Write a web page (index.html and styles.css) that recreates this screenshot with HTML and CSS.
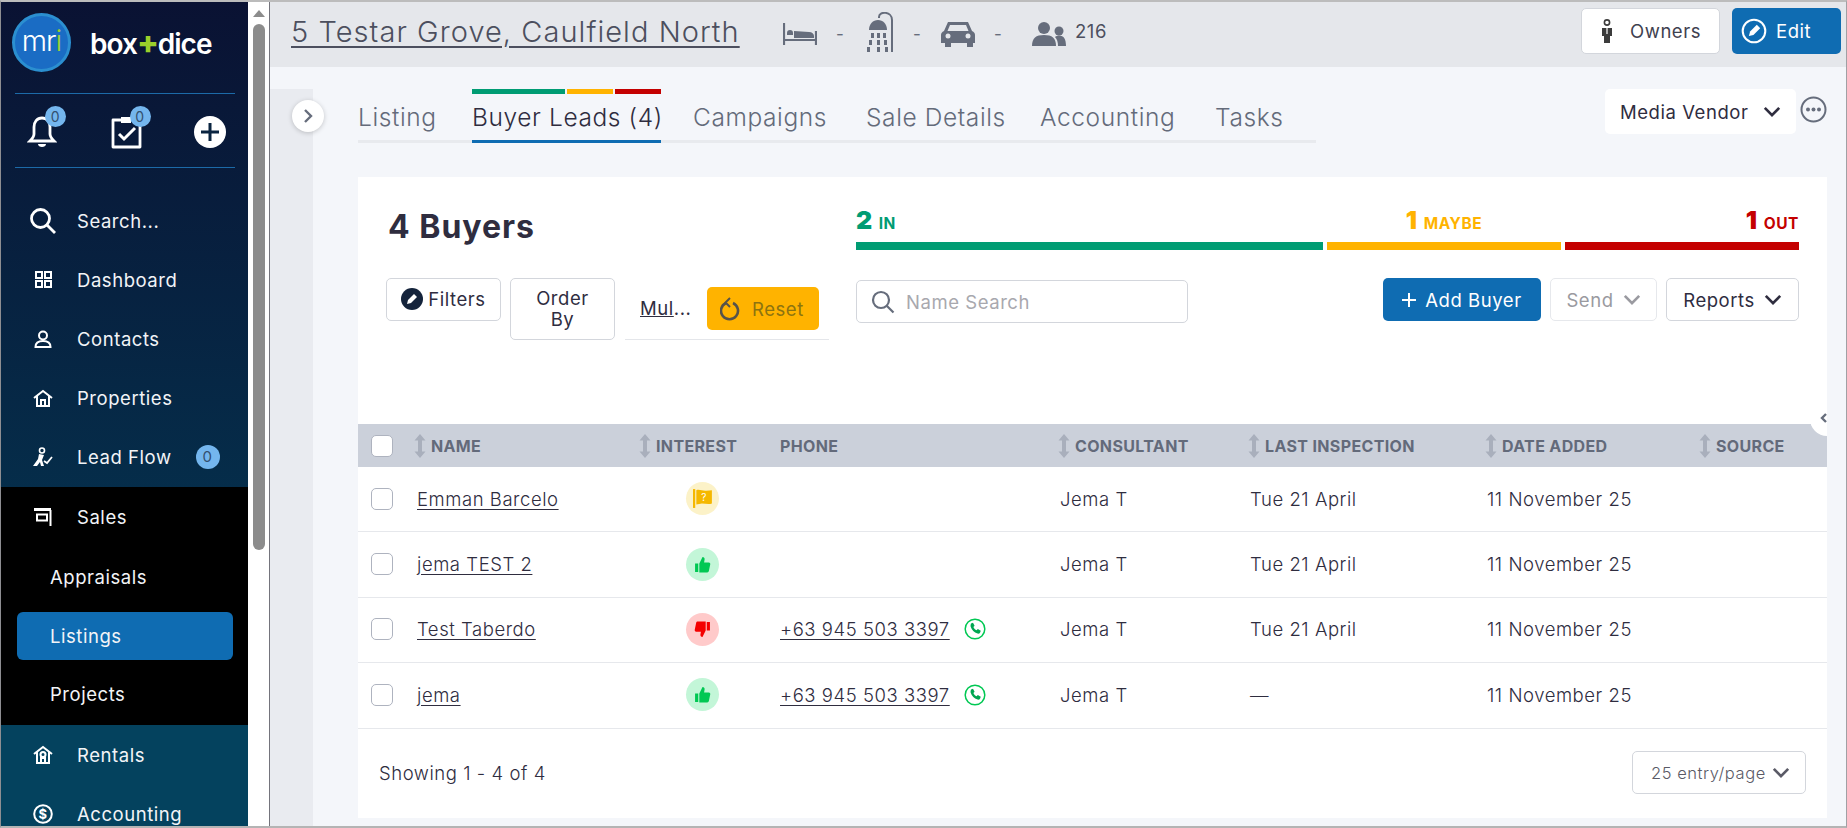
FILE: index.html
```html
<!DOCTYPE html>
<html lang="en">
<head>
<meta charset="UTF-8">
<title>Buyer Leads</title>
<link rel="stylesheet" href="styles.css">
</head>
<body>
<svg class="defs" width="0" height="0">
    <symbol id="sort" viewBox="0 0 12 24"><path d="M6 0l5.500 6.500H8v11h3.500L6 24 .5 17.500H4v-11H.5z" fill="currentColor"/></symbol>
    <symbol id="chev" viewBox="0 0 20 12"><path d="M2 2l8 8 8-8" fill="none" stroke="currentColor" stroke-width="3"/></symbol>
    <symbol id="up" viewBox="0 0 16 16"><path d="M1 7h3v8H1zM5 7l3-6c1.500 0 2 1 2 2l-.5 3H14c1 0 1.500 1 1.300 1.800l-1.300 6.400c-.2.800-.8 1.300-1.500 1.300H5z" fill="#00c853"/></symbol>
    <symbol id="call" viewBox="0 0 22 22"><circle cx="11" cy="11" r="9.800" fill="none" stroke="#00c853" stroke-width="1.500"/><path d="M7 5.500l2-.8 1.600 3-1.200 1.200c.6 1.500 1.700 2.700 3.200 3.400l1.200-1.200 3 1.700-.8 2c-.5.800-1.500 1-2.500.7-3.300-1-5.800-3.600-6.800-6.800-.3-1 0-2.500.3-3.200z" fill="#00a651"/></symbol>
</svg>

<div class="window">
    <aside class="sidebar">
        <div class="brand">
            <div class="mri"><span>mr</span><span class="green">i</span></div>
            <div class="boxdice">box<span class="green">+</span>dice</div>
        </div>
        <div class="quick">
            <div class="quick-item">
                <svg width="30" height="34" viewBox="0 0 30 34"><path d="M15 3c-5 0-8 4-8 9v7c0 3-2 5-4 7h24c-2-2-4-4-4-7v-7c0-5-3-9-8-9z" fill="none" stroke="#fff" stroke-width="2.800"/><path d="M11 29h8c0 2-2 3-4 3s-4-1-4-3z" fill="#fff"/></svg>
                <span class="count">0</span>
            </div>
            <div class="quick-item">
                <svg width="32" height="34" viewBox="0 0 32 34"><path d="M11 5H3v27h27V5h-8" fill="none" stroke="#fff" stroke-width="2.800" stroke-linejoin="round"/><path d="M11 2h10v6H11z" fill="#fff"/><path d="M9 19l5 5 11-11" fill="none" stroke="#fff" stroke-width="3"/></svg>
                <span class="count">0</span>
            </div>
            <div class="quick-item">
                <svg width="32" height="32" viewBox="0 0 32 32"><circle cx="16" cy="16" r="16" fill="#fff"/><path d="M16 7v18M7 16h18" stroke="#0a2440" stroke-width="3"/></svg>
            </div>
        </div>

        <nav class="nav">
            <a class="nav-item"><span class="nav-icon"><svg width="28" height="28" viewBox="0 0 28 28"><circle cx="11.500" cy="11.500" r="9" fill="none" stroke="#fff" stroke-width="2.800"/><path d="M18 18l8 8" stroke="#fff" stroke-width="2.800"/></svg></span>Search...</a>
            <a class="nav-item"><span class="nav-icon"><svg width="17" height="17" viewBox="0 0 17 17" fill="none" stroke="#fff" stroke-width="2"><path d="M1 1h6v6H1zM10 1h6v6h-6zM1 10h6v6H1zM10 10h6v6h-6z"/></svg></span>Dashboard</a>
            <a class="nav-item"><span class="nav-icon"><svg width="18" height="18" viewBox="0 0 18 18" fill="none" stroke="#fff" stroke-width="2"><circle cx="9" cy="5.500" r="4"/><path d="M1.500 17c0-4 3-6 7.500-6s7.500 2 7.500 6z"/></svg></span>Contacts</a>
            <a class="nav-item"><span class="nav-icon"><svg width="20" height="18" viewBox="0 0 20 18" fill="none" stroke="#fff" stroke-width="2"><path d="M1 9l9-7 9 7M4 7v10h12V7M8 17v-6h4v6"/></svg></span>Properties</a>
            <a class="nav-item"><span class="nav-icon"><svg width="20" height="20" viewBox="0 0 20 20"><circle cx="9" cy="3.500" r="2.500" fill="none" stroke="#fff" stroke-width="1.600"/><path d="M6 7l5 1-2 5 2 6H8l-1-4-3 4H0l5-7z" fill="#fff"/><path d="M11 14l3 2 5-6" fill="none" stroke="#fff" stroke-width="1.800"/></svg></span>Lead Flow<span class="nav-count">0</span></a>
            <div class="nav-group">
                <a class="nav-item"><span class="nav-icon"><svg width="18" height="18" viewBox="0 0 18 18" fill="none" stroke="#fff"><path d="M16.500 2v16" stroke-width="2"/><path d="M3 6.500h10v6H3z" stroke-width="2"/><path d="M0 0h17v3H0z" fill="#fff" stroke="none"/></svg></span>Sales</a>
                <a class="nav-sub">Appraisals</a>
                <a class="nav-sub active">Listings</a>
                <a class="nav-sub">Projects</a>
            </div>
            <div class="nav-rest">
                <a class="nav-item"><span class="nav-icon"><svg width="20" height="19" viewBox="0 0 20 19" fill="none" stroke="#fff" stroke-width="2"><path d="M1 9l9-7 9 7M4 7v11h12V7"/><circle cx="10" cy="9.500" r="2.500"/><path d="M8 18v-5h4v5"/></svg></span>Rentals</a>
                <a class="nav-item"><span class="nav-icon"><svg width="20" height="20" viewBox="0 0 20 20"><circle cx="10" cy="10" r="8.800" fill="none" stroke="#fff" stroke-width="2"/><text x="10" y="14.500" text-anchor="middle" class="dollar">$</text></svg></span>Accounting</a>
            </div>
        </nav>
    </aside>

    <div class="scrollbar">
        <div class="scroll-up"></div>
        <div class="scroll-thumb"></div>
    </div>

    <main class="main">
        <header class="topbar">
            <a class="address">5 Testar Grove, Caulfield North</a>
            <div class="facts">
                <svg width="34" height="24" viewBox="0 0 34 24"><path d="M1 1v22M33 9v14M1 18h32" fill="none" stroke="#666d7c" stroke-width="2.200"/><path d="M4 11a3 3 0 1 1 6 0v2H4zM11 9l15 1c3 0 5 2 5 4v2H11z" fill="#666d7c"/></svg>
                <span class="dash">-</span>
                <svg class="shower" width="28" height="40" viewBox="0 0 28 40"><path d="M13 6V5c0-6 13-6 13 3v32" fill="none" stroke="#666d7c" stroke-width="2"/><path d="M3 18c0-6 4-10 9-10s9 4 9 10z" fill="#666d7c"/><path d="M5 21h3v5H5zM11 21h3v5h-3zM17 21h3v5h-3zM3 28h3v5H3zM11 28h3v5h-3zM18 28h3v5h-3zM1 35h3v5H1zM11 35h3v5h-3zM19 35h3v5h-3z" fill="#666d7c"/></svg>
                <span class="dash short">-</span>
                <svg width="34" height="28" viewBox="0 0 34 28"><path d="M7 2h20l4 9c2 1 3 2 3 4v8h-2v4h-6v-4H10v4H4v-4H0v-8c0-2 1-3 3-4z" fill="#666d7c"/><path d="M9 5h16l2.500 6h-21z" fill="#e5e7eb"/><circle cx="7" cy="16" r="2.500" fill="#e5e7eb"/><circle cx="27" cy="16" r="2.500" fill="#e5e7eb"/></svg>
                <span class="dash">-</span>
                <svg class="people" width="34" height="24" viewBox="0 0 34 24"><circle cx="12" cy="6" r="6" fill="#666d7c"/><path d="M0 24c0-8 4-11 12-11s12 3 12 11z" fill="#666d7c"/><circle cx="27" cy="9" r="4.500" fill="#666d7c"/><path d="M26 24c0-4-1-7-3-9 1-1 3-1.500 4-1.500 5 0 7 4 7 10.500z" fill="#666d7c"/></svg>
                <span class="people-count">216</span>
            </div>
            <div class="top-actions">
                <button class="btn-owners">
                    <svg width="12" height="24" viewBox="0 0 12 24"><circle cx="6" cy="3.500" r="2.600" fill="none" stroke="#3c3c3c" stroke-width="1.600"/><path d="M1 9h10v8H9v7H3v-7H1z" fill="#3c3c3c"/><path d="M5.400 9h1.200v6H5.400z" fill="#fff"/></svg>
                    Owners
                </button>
                <button class="btn-edit">
                    <svg width="26" height="26" viewBox="0 0 23 23"><circle cx="11.500" cy="11.500" r="10" fill="none" stroke="#fff" stroke-width="1.800"/><path d="M7 16l1-4 6-6 3 3-6 6z" fill="#fff"/></svg>
                    Edit
                </button>
            </div>
        </header>

        <div class="content">
            <div class="rail"></div>
            <button class="rail-toggle"><svg width="10" height="16" viewBox="0 0 10 16"><path d="M2 2l6 6-6 6" fill="none" stroke="#666d7c" stroke-width="2.400"/></svg></button>
            <div class="page">
                <div class="tabs-row">
                    <div class="tabs">
                        <a class="tab">Listing</a>
                        <a class="tab active">
                            <span class="tab-bars"><i class="in"></i><i class="maybe"></i><i class="out"></i></span>
                            Buyer Leads (4)
                        </a>
                        <a class="tab">Campaigns</a>
                        <a class="tab">Sale Details</a>
                        <a class="tab">Accounting</a>
                        <a class="tab">Tasks</a>
                    </div>
                    <div class="tabs-right">
                        <div class="media-select">Media Vendor <svg width="18" height="11"><use href="#chev"/></svg></div>
                        <svg class="more" width="27" height="27" viewBox="0 0 27 27"><circle cx="13.500" cy="13.500" r="12" fill="none" stroke="#666d7c" stroke-width="2"/><circle cx="8" cy="13.500" r="2" fill="#666d7c"/><circle cx="13.500" cy="13.500" r="2" fill="#666d7c"/><circle cx="19" cy="13.500" r="2" fill="#666d7c"/></svg>
                    </div>
                </div>

                <section class="card">
                    <button class="card-handle"><svg width="8" height="12" viewBox="0 0 8 12"><path d="M6 2L2 6l4 4" fill="none" stroke="#666d7c" stroke-width="2.400"/></svg></button>
                    <div class="card-head">
                        <div class="head-left">
                            <h1>4 Buyers</h1>
                            <div class="filters">
                                <button class="btn btn-filters">
                                    <svg width="22" height="22" viewBox="0 0 22 22"><circle cx="11" cy="11" r="11" fill="#14233b"/><path d="M6 16l1-4 6-6 3 3-6 6z" fill="#fff"/></svg>
                                    Filters
                                </button>
                                <button class="btn btn-order">Order By</button>
                                <div class="multi">
                                    <a class="multi-link"><u>Mul</u>...</a>
                                    <button class="btn-reset">
                                        <svg width="20" height="24" viewBox="0 0 20 24" fill="none" stroke="#56534a" stroke-width="2.600"><path d="M13 6a8.500 8.500 0 1 1-7 0"/><path d="M10 1L5.500 5.500 10 10" stroke-width="2"/></svg>
                                        Reset
                                    </button>
                                </div>
                            </div>
                        </div>
                        <div class="head-right">
                            <div class="tally">
                                <div class="tally-part in"><div class="tally-label"><b>2</b>IN</div><div class="tally-bar"></div></div>
                                <div class="tally-part maybe"><div class="tally-label center"><b>1</b>MAYBE</div><div class="tally-bar"></div></div>
                                <div class="tally-part out"><div class="tally-label end"><b>1</b>OUT</div><div class="tally-bar"></div></div>
                            </div>
                            <div class="tools">
                                <div class="search">
                                    <svg width="24" height="24" viewBox="0 0 24 24"><circle cx="10" cy="10" r="8" fill="none" stroke="#666d7c" stroke-width="2.200"/><path d="M15.500 15.500l7 7" stroke="#666d7c" stroke-width="2.200"/></svg>
                                    Name Search
                                </div>
                                <div class="tool-buttons">
                                    <button class="btn-add"><svg width="14" height="14" viewBox="0 0 14 14"><path d="M7 0v14M0 7h14" stroke="#fff" stroke-width="2"/></svg>Add Buyer</button>
                                    <button class="btn btn-send">Send <svg width="18" height="11"><use href="#chev"/></svg></button>
                                    <button class="btn btn-reports">Reports <svg width="18" height="11"><use href="#chev"/></svg></button>
                                </div>
                            </div>
                        </div>
                    </div>

                    <div class="table">
                        <div class="tr th">
                            <div class="cell-check"><span class="check on-head"></span></div>
                            <div><svg class="sort" width="12" height="24"><use href="#sort"/></svg>NAME</div>
                            <div><svg class="sort" width="12" height="24"><use href="#sort"/></svg>INTEREST</div>
                            <div class="plain">PHONE</div>
                            <div><svg class="sort" width="12" height="24"><use href="#sort"/></svg>CONSULTANT</div>
                            <div><svg class="sort" width="12" height="24"><use href="#sort"/></svg>LAST INSPECTION</div>
                            <div><svg class="sort" width="12" height="24"><use href="#sort"/></svg>DATE ADDED</div>
                            <div><svg class="sort" width="12" height="24"><use href="#sort"/></svg>SOURCE</div>
                        </div>
                        <div class="tr">
                            <div class="cell-check"><span class="check"></span></div>
                            <div><a class="name">Emman Barcelo</a></div>
                            <div><span class="badge maybe"><svg width="20" height="19" viewBox="0 0 18 17"><path d="M0 0h2v17H0z" fill="#f5b800"/><path d="M3 1c3-1 6 1 9 .5L17 1v12c-3 1-6 0-9 0l-5 1z" fill="#f5b800"/><text x="10" y="10.500" class="flag-mark">?</text></svg></span></div>
                            <div></div>
                            <div class="td">Jema T</div>
                            <div class="td">Tue 21 April</div>
                            <div class="td">11 November 25</div>
                            <div></div>
                        </div>
                        <div class="tr">
                            <div class="cell-check"><span class="check"></span></div>
                            <div><a class="name">jema TEST 2</a></div>
                            <div><span class="badge in"><svg width="17" height="17"><use href="#up"/></svg></span></div>
                            <div></div>
                            <div class="td">Jema T</div>
                            <div class="td">Tue 21 April</div>
                            <div class="td">11 November 25</div>
                            <div></div>
                        </div>
                        <div class="tr">
                            <div class="cell-check"><span class="check"></span></div>
                            <div><a class="name">Test Taberdo</a></div>
                            <div><span class="badge out"><svg width="17" height="17" viewBox="0 0 16 16"><path d="M15 9h-3V1h3zM11 9l-3 6c-1.500 0-2-1-2-2l.5-3H2C1 10 .5 9 .7 8.200L2 1.800C2.200 1 2.800.5 3.500.5H11z" fill="#f40000"/></svg></span></div>
                            <div class="phone-cell"><a class="phone">+63 945 503 3397</a><svg width="22" height="22"><use href="#call"/></svg></div>
                            <div class="td">Jema T</div>
                            <div class="td">Tue 21 April</div>
                            <div class="td">11 November 25</div>
                            <div></div>
                        </div>
                        <div class="tr">
                            <div class="cell-check"><span class="check"></span></div>
                            <div><a class="name">jema</a></div>
                            <div><span class="badge in"><svg width="17" height="17"><use href="#up"/></svg></span></div>
                            <div class="phone-cell"><a class="phone">+63 945 503 3397</a><svg width="22" height="22"><use href="#call"/></svg></div>
                            <div class="td">Jema T</div>
                            <div class="td">—</div>
                            <div class="td">11 November 25</div>
                            <div></div>
                        </div>
                    </div>

                    <div class="table-foot">
                        <span>Showing 1 - 4 of 4</span>
                        <div class="per-page">25 entry/page <svg width="18" height="11"><use href="#chev"/></svg></div>
                    </div>
                </section>
            </div>
        </div>
    </main>
</div>
</body>
</html>
```

FILE: styles.css
```css
* {
    box-sizing: border-box;
}
html, body {
    margin: 0;
    height: 100%;
    overflow: hidden;
}
body {
    font-family: Inter, "Liberation Sans", sans-serif;
    color: #2f2d3f;
    background: #fff;
    letter-spacing: .55px;
}
button {
    font-family: inherit;
    letter-spacing: inherit;
}
a {
    color: inherit;
}
.defs {
    display: block;
    height: 0;
}
.green {
    color: #9ad02b;
}

.window {
    display: flex;
    width: 1847px;
    height: 828px;
    border-top: 2px solid #bcbcbc;
    border-left: 1px solid #8e8e92;
    border-right: 1px solid #a0a0a4;
    border-bottom: 2px solid #b4b4b4;
    overflow: hidden;
}

/* sidebar */
.sidebar {
    width: 247px;
    flex: none;
    color: #f2f4f7;
    background: linear-gradient(#0a1233 0, #052d4a 488px);
    overflow: hidden;
    font-size: 18.500px;
}
.brand {
    display: flex;
    align-items: center;
    height: 92px;
    margin: 0 13px 0 14px;
    padding-bottom: 10px;
    border-bottom: 1px solid #1c6aa8;
}
.mri {
    display: flex;
    align-items: center;
    justify-content: center;
    width: 59px;
    height: 59px;
    margin-left: -3px;
    border-radius: 50%;
    background: #1a6cc4;
    border: 3px solid #2b8fd0;
    color: #fff;
    font-size: 29px;
    font-weight: 300;
    letter-spacing: -1px;
    padding-bottom: 4px;
}
.boxdice {
    margin-left: 19px;
    color: #fff;
    font-size: 28px;
    font-weight: 600;
    letter-spacing: -1px;
}
.boxdice .green {
    font-weight: 800;
    font-size: 32px;
}
.quick {
    display: flex;
    justify-content: space-between;
    align-items: center;
    height: 74px;
    margin: 0 13px 0 14px;
    padding: 2px 9px 0 12px;
    border-bottom: 1px solid #1c6aa8;
}
.quick-item {
    position: relative;
    display: flex;
}
.count {
    position: absolute;
    top: -9px;
    right: -9px;
    width: 21px;
    height: 21px;
    border-radius: 50%;
    background: #74b6ee;
    color: #33506f;
    font-size: 14px;
    line-height: 21px;
    text-align: center;
}
.nav {
    padding-top: 23px;
}
.nav-item {
    display: flex;
    align-items: center;
    height: 59.200px;
    padding-left: 28px;
    white-space: nowrap;
}
.nav-icon {
    display: flex;
    justify-content: center;
    align-items: center;
    width: 28px;
    margin-right: 20px;
}
.nav-count {
    width: 24px;
    height: 24px;
    margin-left: 24px;
    border-radius: 50%;
    background: #74b6ee;
    color: #33506f;
    font-size: 15px;
    line-height: 24px;
    text-align: center;
}
.nav-group {
    padding-bottom: 7px;
    background: #000;
}
.nav-sub {
    display: flex;
    align-items: center;
    height: 48px;
    margin: 0 15px 0 16px;
    padding-left: 33px;
    border-radius: 6px;
}
.nav-sub:nth-child(2) {
    margin-top: 7px;
}
.nav-sub.active {
    margin-top: 11px;
    margin-bottom: 10px;
    background: #0f6cb2;
}
.nav-rest {
    background: #04425e;
}
.dollar {
    fill: #fff;
    font-size: 13px;
    font-weight: 700;
}

/* scrollbar */
.scrollbar {
    width: 22px;
    flex: none;
    background: #fff;
    padding: 8px 4px 0 5px;
    border-right: 1px solid #74747c;
}
.scroll-up {
    width: 0;
    height: 0;
    margin: 0 auto 7px;
    border: 6px solid transparent;
    border-top: 0;
    border-bottom: 7px solid #8c8c8c;
}
.scroll-thumb {
    height: 526px;
    border-radius: 6px;
    background: #8c8c8c;
}

/* top bar */
.main {
    flex: 1;
    min-width: 0;
    display: flex;
    flex-direction: column;
}
.topbar {
    display: flex;
    align-items: center;
    flex: none;
    height: 65px;
    padding: 0 5px 2px 21px;
    background: #e5e7eb;
}
.address {
    width: 470px;
    margin-bottom: 4px;
    color: #4c4f5e;
    font-size: 29px;
    font-weight: 300;
    letter-spacing: 1.050px;
    text-decoration: underline;
    text-underline-offset: 4px;
    white-space: nowrap;
}
.facts {
    display: flex;
    align-items: center;
    margin-left: 22px;
    height: 44px;
}
.dash {
    width: 49px;
    padding-left: 19px;
    color: #666d7c;
    font-size: 17px;
}
.dash.short {
    width: 47px;
}
.shower {
    margin-bottom: 4px;
}
.people {
    margin-left: 8px;
}
.people-count {
    margin-left: 9px;
    margin-bottom: 6px;
    font-size: 18.500px;
    color: #4c4f5e;
}
.top-actions {
    display: flex;
    gap: 12px;
    margin-left: auto;
    margin-bottom: 5px;
}
.btn-owners, .btn-edit {
    display: flex;
    align-items: center;
    height: 46px;
    border-radius: 5px;
    font-size: 18.500px;
}
.btn-owners {
    width: 139px;
    padding-left: 19px;
    gap: 17px;
    background: #fff;
    border: 1px solid #d3d6dc;
    color: #3f4150;
}
.btn-edit {
    width: 109px;
    padding-left: 9px;
    gap: 9px;
    background: #0f6cb2;
    border: 0;
    color: #fff;
}

/* content */
.content {
    position: relative;
    flex: 1;
    display: flex;
    min-height: 0;
    background: #f4f6fa;
}
.rail {
    width: 43px;
    flex: none;
    margin-top: 22px;
    background: #e9ebf0;
}
.rail-toggle {
    position: absolute;
    left: 22px;
    top: 33px;
    display: flex;
    align-items: center;
    justify-content: center;
    width: 32px;
    height: 32px;
    padding: 0;
    border: 0;
    border-radius: 50%;
    background: #fff;
    box-shadow: 0 1px 5px rgba(0,0,0,.2);
}
.page {
    flex: 1;
    min-width: 0;
    padding: 22px 19px 0 45px;
}
.tabs-row {
    display: flex;
    align-items: flex-start;
    justify-content: space-between;
}
.tabs {
    display: grid;
    grid-template-columns: 82px 189px 141px 142px 143px 67px;
    align-items: end;
    gap: 32px;
    width: 958px;
    height: 54px;
    border-bottom: 3px solid #e8eaee;
}
.tab {
    display: flex;
    flex-direction: column;
    margin-bottom: -3px;
    padding-bottom: 8px;
    border-bottom: 3px solid transparent;
    color: #646b7a;
    font-size: 24.500px;
    font-weight: 300;
    line-height: 30px;
    white-space: nowrap;
    letter-spacing: .6px;
}
.tab.active {
    border-bottom-color: #0f6cb2;
    color: #2f2d3f;
}
.tab-bars {
    display: flex;
    gap: 2px;
    height: 5px;
    margin-bottom: 8px;
}
.tab-bars i:nth-child(1) {
    flex: 2;
    background: #009c73;
}
.tab-bars i:nth-child(2) {
    flex: 1;
    background: #ffb300;
}
.tab-bars i:nth-child(3) {
    flex: 1;
    background: #c40000;
}
.tabs-right {
    display: flex;
    align-items: flex-start;
    gap: 4px;
}
.media-select {
    display: flex;
    align-items: center;
    justify-content: space-between;
    width: 191px;
    height: 45px;
    padding: 0 15px;
    border-radius: 5px;
    background: #fff;
    font-size: 18.500px;
    white-space: nowrap;
}
.more {
    margin-top: 7px;
}

/* card */
.card {
    position: relative;
    margin-top: 34px;
    height: 641px;
    background: #fff;
}
.card-handle {
    position: absolute;
    right: 0;
    top: 223px;
    width: 17px;
    height: 36px;
    padding: 0 0 0 10px;
    border: 0;
    border-radius: 18px 0 0 18px;
    background: #fff;
    display: flex;
    align-items: center;
    overflow: hidden;
}
.card-handle svg {
    flex: none;
}
.card-head {
    display: grid;
    grid-template-columns: 498px 943px;
    height: 247px;
}
.head-left {
    padding: 31px 0 0 28px;
}
h1 {
    margin: 0 0 0 2px;
    font-size: 32px;
    font-weight: 700;
    line-height: 38px;
    letter-spacing: 1px;
}
.filters {
    display: flex;
    align-items: flex-start;
    margin-top: 32px;
}
.btn {
    background: #fff;
    border: 1px solid #d3d6dc;
    border-radius: 5px;
    color: #2f2d3f;
    font-size: 18.500px;
}
.btn-filters {
    display: flex;
    align-items: center;
    justify-content: center;
    gap: 5px;
    width: 115px;
    height: 43px;
    padding: 0 0 2px;
}
.btn-order {
    width: 105px;
    height: 62px;
    margin-left: 9px;
    padding: 0 20px;
    line-height: 21px;
}
.multi {
    display: flex;
    align-items: center;
    width: 204px;
    height: 62px;
    margin-left: 10px;
    padding-left: 15px;
    border-bottom: 1px solid #e4e6ea;
}
.multi-link {
    width: 67px;
    margin-top: -1px;
    font-size: 18.500px;
    white-space: nowrap;
}
.btn-reset {
    display: flex;
    align-items: center;
    gap: 12px;
    width: 112px;
    height: 43px;
    padding: 0 0 0 13px;
    border: 0;
    border-radius: 5px;
    background: #ffb300;
    color: #8c7310;
    font-size: 18.500px;
}
.head-right {
    padding-top: 31px;
}
.tally {
    display: flex;
    gap: 4px;
    height: 42px;
}
.tally-part {
    display: flex;
    flex-direction: column;
    justify-content: flex-end;
    flex: 1;
}
.tally-part.in {
    flex: none;
    width: 467px;
    color: #009c73;
}
.tally-part.maybe {
    color: #ffb300;
}
.tally-part.out {
    color: #c40000;
}
.tally-label {
    margin-bottom: 6px;
    font-size: 15.500px;
    font-weight: 700;
    line-height: 24px;
}
.tally-label b {
    margin-right: 6px;
    font-size: 25px;
}
.tally-label.center {
    text-align: center;
}
.tally-label.end {
    text-align: right;
}
.tally-bar {
    height: 11px;
    background: currentColor;
}
.tools {
    display: flex;
    justify-content: space-between;
    margin-top: 28px;
}
.search {
    display: flex;
    align-items: center;
    gap: 11px;
    width: 332px;
    height: 43px;
    margin-top: 2px;
    padding-left: 14px;
    border: 1px solid #d3d6dc;
    border-radius: 5px;
    color: #a8a8ae;
    font-size: 18.500px;
}
.tool-buttons {
    display: flex;
    gap: 9px;
}
.btn-add {
    display: flex;
    align-items: center;
    justify-content: center;
    gap: 9px;
    width: 158px;
    height: 43px;
    padding: 0;
    border: 0;
    border-radius: 5px;
    background: #0f6cb2;
    color: #fff;
    font-size: 18.500px;
}
.btn-send, .btn-reports {
    display: flex;
    align-items: center;
    justify-content: center;
    gap: 9px;
    height: 43px;
    padding: 0;
}
.btn-send {
    width: 107px;
    border-color: #e6e8ec;
    color: #9a9aa0;
}
.btn-reports {
    width: 133px;
}

/* table */
.table {
    overflow: hidden;
}
.tr {
    display: grid;
    grid-template-columns: 56px 225px 141px 278px 190px 237px 214px 128px;
    align-items: center;
    height: 65.400px;
    padding-bottom: 1px;
    border-bottom: 1px solid #e6e8ec;
    font-size: 18.500px;
}
.tr.th {
    height: 43px;
    padding-bottom: 0;
    border-bottom: 0;
    background: #cbd0da;
    color: #636a7a;
    font-size: 16px;
    font-weight: 700;
    letter-spacing: .35px;
}
.th > div {
    display: flex;
    align-items: center;
}
.sort {
    margin-right: 5px;
    color: #a9afbc;
}
.check {
    display: block;
    width: 22px;
    height: 22px;
    margin-left: 13px;
    border: 1px solid #aeb3bf;
    border-radius: 5px;
    background: #fff;
}
.name {
    margin-left: 3px;
    text-decoration: underline;
    text-underline-offset: 3px;
    font-weight: 300;
}
.badge {
    display: flex;
    align-items: center;
    justify-content: center;
    width: 33px;
    height: 33px;
    margin-left: 47px;
    border-radius: 50%;
}
.badge.maybe {
    background: #fcf2c8;
}
.badge.in {
    background: #c3f6d8;
}
.badge.out {
    background: #ffcaca;
}
.flag-mark {
    fill: #fff;
    font-size: 9px;
    text-anchor: middle;
}
.phone-cell {
    display: flex;
    align-items: center;
    gap: 14px;
}
.phone {
    text-decoration: underline;
    text-underline-offset: 3px;
    font-weight: 300;
}
.td {
    padding-left: 2px;
    font-weight: 300;
}
.table-foot {
    display: flex;
    align-items: center;
    justify-content: space-between;
    height: 88px;
    padding: 0 21px 0 21px;
    font-size: 18.500px;
    font-weight: 300;
}
.per-page {
    display: flex;
    align-items: center;
    justify-content: space-between;
    width: 174px;
    height: 43px;
    padding: 0 15px 0 18px;
    border: 1px solid #d3d6dc;
    border-radius: 5px;
    color: #5a5a66;
    font-size: 16.500px;
}
```
